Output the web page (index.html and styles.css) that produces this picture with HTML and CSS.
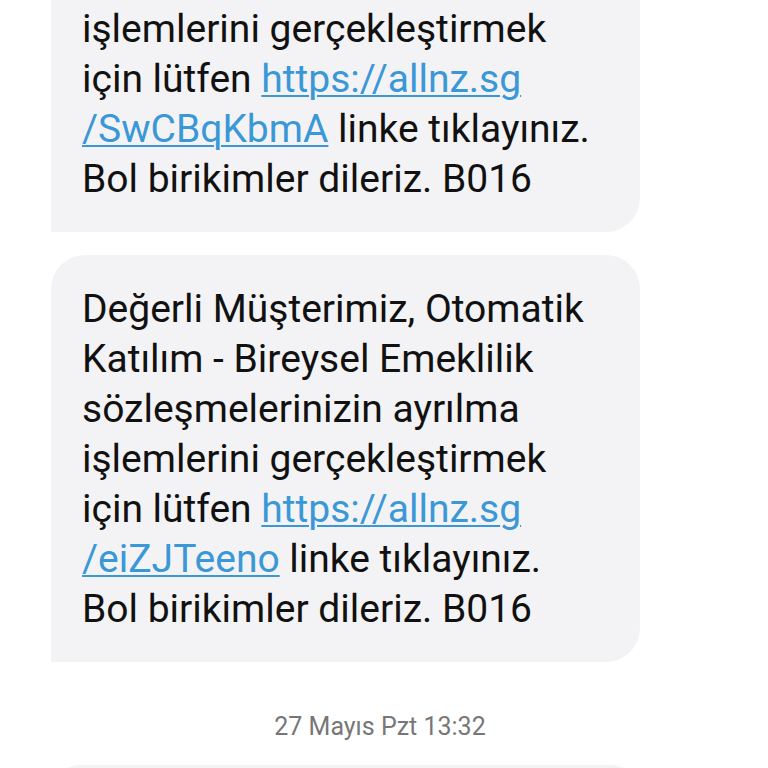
FILE: index.html
```html
<!DOCTYPE html>
<html lang="tr">
<head>
<meta charset="utf-8">
<title>Mesajlar</title>
<link rel="stylesheet" href="styles.css">
</head>
<body>
<div class="thread">
  <div class="bubble">Değerli Müşterimiz, Otomatik<br>Katılım - Bireysel Emeklilik<br>sözleşmelerinizin ayrılma<br>işlemlerini gerçekleştirmek<br>için lütfen <a class="link" href="#">https://allnz.sg<br>/SwCBqKbmA</a> linke tıklayınız.<br>Bol birikimler dileriz. B016</div>
  <div class="bubble">Değerli Müşterimiz, Otomatik<br>Katılım - Bireysel Emeklilik<br>sözleşmelerinizin ayrılma<br>işlemlerini gerçekleştirmek<br>için lütfen <a class="link" href="#">https://allnz.sg<br>/eiZJTeeno</a> linke tıklayınız.<br>Bol birikimler dileriz. B016</div>
  <div class="stamp">27 Mayıs Pzt 13:32</div>
  <div class="bubble next"></div>
</div>
</body>
</html>
```
FILE: styles.css
```css
html, body {
  margin: 0;
  padding: 0;
  background: #ffffff;
  height: 768px;
  overflow: hidden;
}
.thread {
  display: flex;
  flex-direction: column;
  align-items: flex-start;
  gap: 23px;
  margin-top: -175px;
  padding-left: 51px;
}
.bubble {
  box-sizing: border-box;
  width: 589px;
  padding: 29px 20px 28px 31px;
  background: #f3f3f5;
  border-radius: 34px 34px 34px 0;
  font-family: Roboto, "Noto Sans", sans-serif;
  font-size: 39px;
  line-height: 50px;
  color: #111111;
  white-space: nowrap;
}
.link {
  color: #3b98d7;
  text-decoration: underline;
  text-decoration-thickness: 2px;
  text-underline-offset: 3px;
}
.stamp {
  box-sizing: border-box;
  width: 768px;
  margin-left: -51px;
  padding: 27px 8px 0 0;
  text-align: center;
  font-family: Roboto, "Noto Sans", sans-serif;
  font-size: 25px;
  line-height: 30px;
  color: #777777;
}
.next {
  height: 60px;
}
```
